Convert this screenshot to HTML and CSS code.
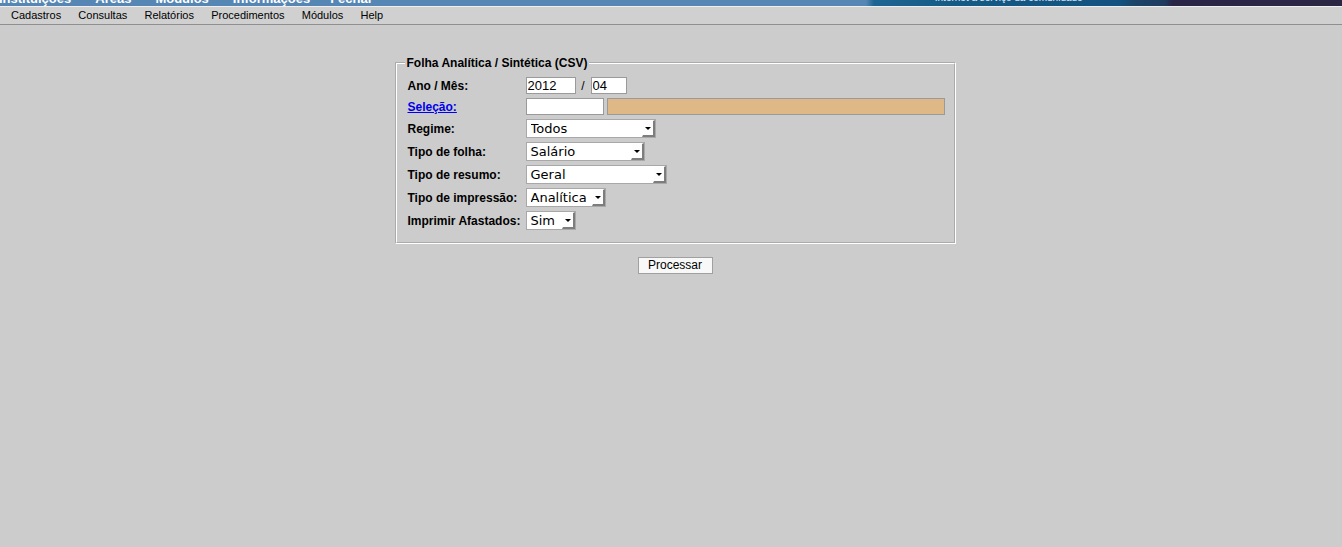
FILE: index.html
```html
<!DOCTYPE html>
<html lang="pt-BR">
<head>
<meta charset="utf-8">
<title>Folha Analítica / Sintética (CSV)</title>
<link rel="stylesheet" href="styles.css">
</head>
<body>
<header class="header">
  <div class="topbar">
    <nav class="topnav">
      <span class="topnav-item">Instituições</span>
      <span class="topnav-item">Áreas</span>
      <span class="topnav-item">Módulos</span>
      <span class="topnav-item">Informações</span>
      <span class="topnav-item">Fechar</span>
    </nav>
    <span class="tagline">Internet a serviço da comunidade</span>
  </div>
  <nav class="menubar">
    <span class="menu-item">Cadastros</span>
    <span class="menu-item">Consultas</span>
    <span class="menu-item">Relatórios</span>
    <span class="menu-item">Procedimentos</span>
    <span class="menu-item">Módulos</span>
    <span class="menu-item">Help</span>
  </nav>
</header>
<main class="main">
  <form class="form">
    <fieldset class="box">
      <legend class="legend">Folha Analítica / Sintética (CSV)</legend>
      <div class="grid">
        <label class="label">Ano / Mês:</label>
        <div class="field">
          <input class="text w-year" type="text" value="2012">
          <span class="slash">/</span>
          <input class="text w-month" type="text" value="04">
        </div>

        <a class="label link" href="#">Seleção:</a>
        <div class="field">
          <input class="text w-sel" type="text" value="">
          <span class="selbox"></span>
        </div>

        <label class="label">Regime:</label>
        <div class="field">
          <span class="sel w-regime"><select class="sel-input"><option>Todos</option></select><span class="sel-btn"><span class="tri"></span></span></span>
        </div>

        <label class="label">Tipo de folha:</label>
        <div class="field">
          <span class="sel w-folha"><select class="sel-input"><option>Salário</option></select><span class="sel-btn"><span class="tri"></span></span></span>
        </div>

        <label class="label">Tipo de resumo:</label>
        <div class="field">
          <span class="sel w-resumo"><select class="sel-input"><option>Geral</option></select><span class="sel-btn"><span class="tri"></span></span></span>
        </div>

        <label class="label">Tipo de impressão:</label>
        <div class="field">
          <span class="sel w-impr"><select class="sel-input"><option>Analítica</option></select><span class="sel-btn"><span class="tri"></span></span></span>
        </div>

        <label class="label">Imprimir Afastados:</label>
        <div class="field">
          <span class="sel w-afast"><select class="sel-input"><option>Sim</option></select><span class="sel-btn"><span class="tri"></span></span></span>
        </div>
      </div>
    </fieldset>
    <div class="actions">
      <button class="btn" type="button">Processar</button>
    </div>
  </form>
</main>
</body>
</html>
```

FILE: styles.css
```css
html, body {
  margin: 0;
  padding: 0;
}
body {
  background: #cccccc;
  font-family: "Liberation Sans", Arial, sans-serif;
  color: #000;
  min-height: 547px;
}

/* Top blue strip */
.topbar {
  height: 6px;
  overflow: hidden;
  display: flex;
  align-items: flex-end;
  background: linear-gradient(to right,
    #5686b4 0, #5686b4 866px,
    #1d6593 874px, #155a86 960px, #135280 1120px,
    #1c4468 1135px, #1f3c60 1165px,
    #2a2546 1172px, #2b2644 1342px);
}
.topnav {
  display: flex;
  gap: 24px;
  margin-left: -1px;
}
.topnav-item {
  font-size: 13px;
  font-weight: bold;
  line-height: 14px;
  color: #fff;
  white-space: nowrap;
}
.topnav-item:last-child {
  margin-left: -4px;
}
.tagline {
  margin-left: 562px;
  font-size: 10px;
  line-height: 12px;
  color: #e6ecf2;
  margin-bottom: 2px;
  white-space: nowrap;
}

/* Menu bar */
.menubar {
  border-top: 1px solid #eeeeee;
  background: #d0d0d0;
  border-bottom: 1px solid #8f8f8f;
  height: 17px;
  display: flex;
  align-items: center;
  gap: 17.2px;
  padding-left: 11px;
}
.menu-item {
  font-size: 11px;
  line-height: 13px;
  color: #000;
  white-space: nowrap;
}

/* Main */
.main {
  padding: 31px 0 0 8px;
}
.form {
  width: 561px;
  margin: 0 auto;
}
.box {
  margin: 0;
  padding: 7px 9px 12px 11px;
  border: 2px groove #ffffff;
  min-width: 0;
}
.legend {
  font-size: 12px;
  font-weight: bold;
  padding: 0 2px;
  margin-left: -3px;
  line-height: 14px;
}
.grid {
  display: grid;
  grid-template-columns: 118px 1fr;
  row-gap: 4px;
  align-items: center;
}
.label {
  font-size: 12px;
  font-weight: bold;
  color: #000;
  white-space: nowrap;
}
.link {
  color: #0000ee;
  text-decoration: underline;
}
.field {
  display: flex;
  align-items: center;
}
.text {
  box-sizing: border-box;
  height: 17px;
  border: 1px solid #9a9a9a;
  background: #fff;
  font-family: "Liberation Sans", Arial, sans-serif;
  font-size: 13px;
  padding: 0 1px;
  margin: 0;
  color: #000;
  outline: none;
}
.w-year { width: 50px; }
.w-month { width: 36px; }
.w-sel { width: 78px; }
.slash {
  font-size: 12px;
  width: 15px;
  text-align: center;
}
.selbox {
  box-sizing: border-box;
  margin-left: 3px;
  width: 338px;
  height: 17px;
  background: #deb887;
  border: 1px solid #9a9a9a;
}

/* select-like control */
.sel {
  box-sizing: border-box;
  display: inline-flex;
  height: 19px;
  background: #fff;
  border: 1px solid #a8a8a8;
}
.sel-input {
  appearance: none;
  -webkit-appearance: none;
  flex: 1;
  min-width: 0;
  border: none;
  background: transparent;
  font-family: "DejaVu Sans", Verdana, sans-serif;
  font-size: 13px;
  color: #000;
  padding: 0 0 0 4px;
  margin: 0;
  height: 17px;
  outline: none;
}
.sel-btn {
  box-sizing: border-box;
  width: 13px;
  height: 17px;
  background: #fdfdfd;
  border-style: solid;
  border-width: 1px 2px 2px 1px;
  border-color: #ffffff #7d7d7d #7d7d7d #ffffff;
  display: flex;
  align-items: center;
  justify-content: center;
}
.tri {
  width: 0;
  height: 0;
  border-left: 3px solid transparent;
  border-right: 3px solid transparent;
  border-top: 3px solid #000;
  margin-top: 1px;
}
.w-regime { width: 130px; }
.w-folha { width: 119px; }
.w-resumo { width: 141px; }
.w-impr { width: 80px; }
.w-afast { width: 50px; }

.actions {
  display: flex;
  justify-content: center;
  padding-top: 13px;
}
.btn {
  box-sizing: border-box;
  width: 75px;
  height: 17px;
  padding: 0;
  background: #f8f8f8;
  border: 1px solid #a0a0a0;
  font-family: "Liberation Sans", Arial, sans-serif;
  font-size: 12px;
  line-height: 15px;
  color: #000;
}
```
